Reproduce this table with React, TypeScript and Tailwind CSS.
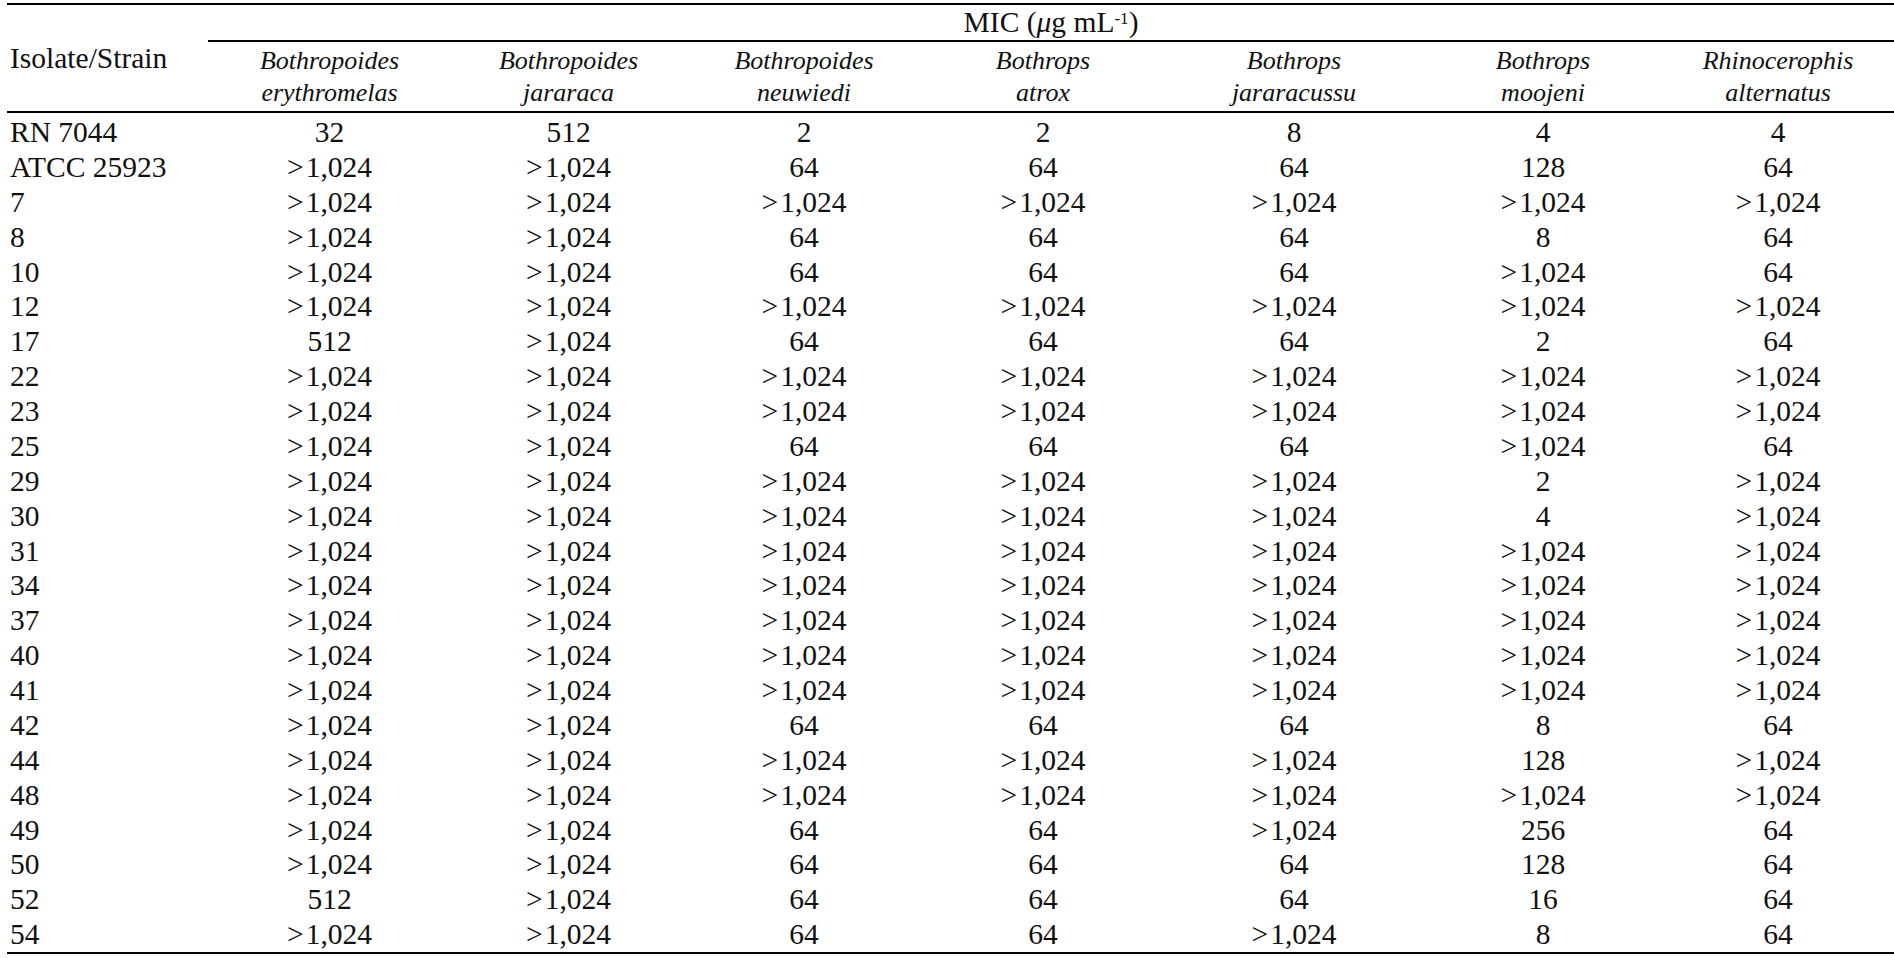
import React from "react";

const species: [string, string][] = [
  ["Bothropoides", "erythromelas"],
  ["Bothropoides", "jararaca"],
  ["Bothropoides", "neuwiedi"],
  ["Bothrops", "atrox"],
  ["Bothrops", "jararacussu"],
  ["Bothrops", "moojeni"],
  ["Rhinocerophis", "alternatus"],
];

const G = ">1,024";
const ALL = [G, G, G, G, G, G, G];

const rows: [string, string[]][] = [
  ["RN 7044", ["32", "512", "2", "2", "8", "4", "4"]],
  ["ATCC 25923", [G, G, "64", "64", "64", "128", "64"]],
  ["7", ALL],
  ["8", [G, G, "64", "64", "64", "8", "64"]],
  ["10", [G, G, "64", "64", "64", G, "64"]],
  ["12", ALL],
  ["17", ["512", G, "64", "64", "64", "2", "64"]],
  ["22", ALL],
  ["23", ALL],
  ["25", [G, G, "64", "64", "64", G, "64"]],
  ["29", [G, G, G, G, G, "2", G]],
  ["30", [G, G, G, G, G, "4", G]],
  ["31", ALL],
  ["34", ALL],
  ["37", ALL],
  ["40", ALL],
  ["41", ALL],
  ["42", [G, G, "64", "64", "64", "8", "64"]],
  ["44", [G, G, G, G, G, "128", G]],
  ["48", ALL],
  ["49", [G, G, "64", "64", G, "256", "64"]],
  ["50", [G, G, "64", "64", "64", "128", "64"]],
  ["52", ["512", G, "64", "64", "64", "16", "64"]],
  ["54", [G, G, "64", "64", G, "8", "64"]],
];

// ">1,024" is set with a little air after the sign, as in the print
function Value({ v }: { v: string }) {
  if (v.startsWith(">")) {
    return (
      <>
        <span className="mr-[2px]">&gt;</span>
        {v.slice(1)}
      </>
    );
  }
  return <>{v}</>;
}

export default function App() {
  return (
    <div className="w-[1894px] h-[958px] overflow-hidden bg-white pl-[7px] pt-[3px] font-['Liberation_Serif',serif] text-[29.5px] text-[#111]">
      <table className="w-[1887px] table-fixed border-collapse">
        <colgroup>
          <col className="w-[201px]" />
          <col className="w-[243px]" />
          <col className="w-[235px]" />
          <col className="w-[236px]" />
          <col className="w-[242px]" />
          <col className="w-[260px]" />
          <col className="w-[238px]" />
          <col className="w-[232px]" />
        </colgroup>
        <thead>
          <tr className="border-t-2 border-black">
            <th rowSpan={2} className="pl-[3px] text-left align-middle font-normal whitespace-nowrap">
              Isolate/Strain
            </th>
            <th colSpan={7} className="h-[37px] border-b-2 border-black p-0 text-center font-normal leading-[35px]">
              MIC (<i>μ</i>g mL<sup className="text-[17px]">-1</sup>)
            </th>
          </tr>
          <tr className="border-b-2 border-black">
            {species.map(([genus, name]) => (
              <th key={name} className="h-[71px] p-0 text-center align-middle text-[26px] font-normal italic leading-[32px]">
                <div>{genus}</div>
                <div>{name}</div>
              </th>
            ))}
          </tr>
        </thead>
        <tbody>
          {rows.map(([id, vals], i) => {
            const first = i === 0;
            const last = i === rows.length - 1;
            const cell = first ? "h-[36.87px] pt-[2px]" : "h-[34.87px]";
            return (
              <tr key={id} className={last ? "border-b-2 border-black" : ""}>
                <td className={`${cell} px-0 pb-0 pl-[3px] leading-[34.87px] whitespace-nowrap`}>{id}</td>
                {vals.map((v, j) => (
                  <td key={j} className={`${cell} px-0 pb-0 text-center leading-[34.87px] whitespace-nowrap`}>
                    <Value v={v} />
                  </td>
                ))}
              </tr>
            );
          })}
        </tbody>
      </table>
    </div>
  );
}
